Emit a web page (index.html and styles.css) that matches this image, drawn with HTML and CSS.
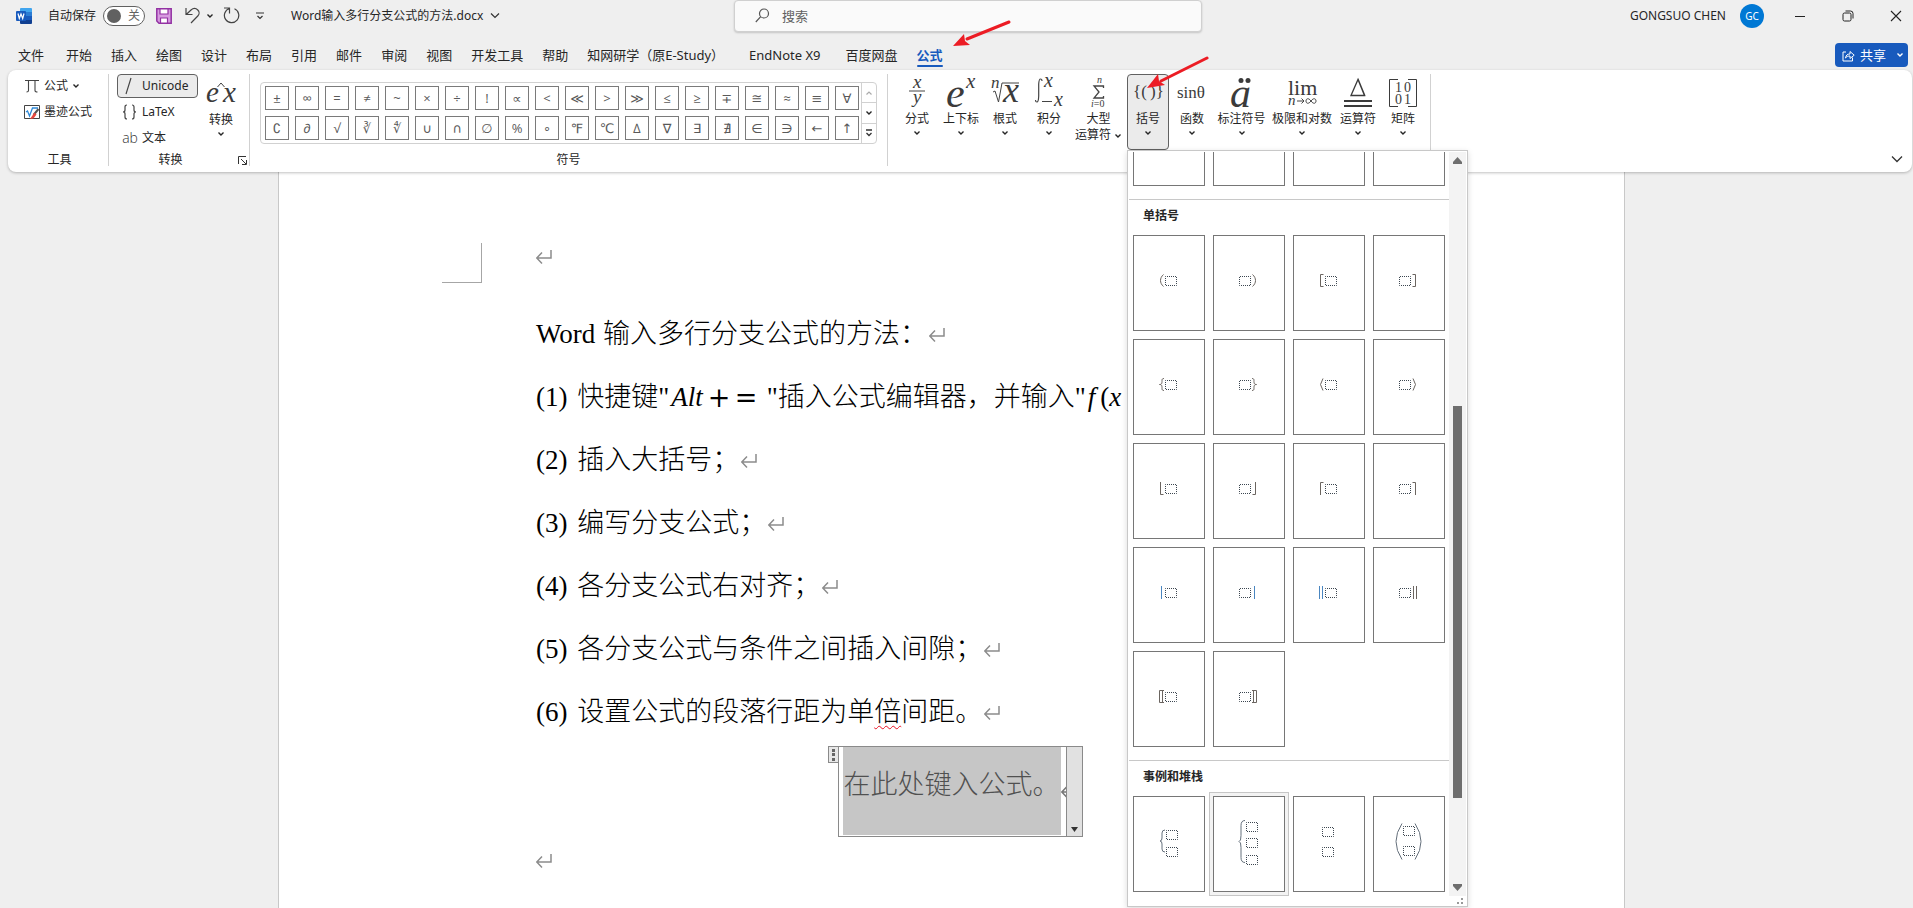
FILE: index.html
```html
<!DOCTYPE html>
<html lang="zh-CN">
<head>
<meta charset="utf-8">
<title>Word输入多行分支公式的方法.docx</title>
<link rel="stylesheet" href="styles.css">
</head>
<body>
<svg class="defs" aria-hidden="true">
  <symbol id="caret" viewBox="0 0 8 6"><path d="M1.500 1.500 4 4 6.500 1.500" fill="none" stroke="currentColor" stroke-width="1.400"/></symbol>
  <symbol id="ret" viewBox="0 0 18 16"><path d="M15 1v8H1M6 3.500.8 9 6 14.500" fill="none" stroke="#8c8c8c" stroke-width="1.500"/></symbol>
  <symbol id="ph" viewBox="0 0 12 10"><rect x=".5" y=".5" width="11" height="9" fill="none" stroke="#3c4650" stroke-dasharray="1 1" stroke-dashoffset=".5"/></symbol>
  <symbol id="paren" viewBox="0 0 5 13"><path d="M4.500.5C.5 4 .5 9 4.500 12.500"/></symbol>
  <symbol id="square" viewBox="0 0 5 13"><path d="M4.500.5h-3v12h3"/></symbol>
  <symbol id="brace" viewBox="0 0 5 13"><path d="M5 .5C2 .5 3.500 3 2.800 5 2.600 6 2 6.500.5 6.500c1.500 0 2.100.5 2.300 1.500C3.500 10 2 12.500 5 12.500"/></symbol>
  <symbol id="angle" viewBox="0 0 5 13"><path d="M4 .5 1.500 6.500 4 12.500"/></symbol>
  <symbol id="floor" viewBox="0 0 5 13"><path d="M1.500 0v12.500h3"/></symbol>
  <symbol id="ceil" viewBox="0 0 5 13"><path d="M4.500.5h-3V13"/></symbol>
  <symbol id="bar" viewBox="0 0 5 13"><path d="M2.500 0v13"/></symbol>
  <symbol id="dbar" viewBox="0 0 5 13"><path d="M.5 0v13M3.500 0v13"/></symbol>
  <symbol id="white" viewBox="0 0 5 13"><path d="M5 .5H.5v12H5M3.500.5v12"/></symbol>
</svg>

<header class="app-head">
  <div class="titlebar">
    <div class="quick">
      <svg class="word" width="16" height="16" viewBox="0 0 16 16"><path d="M5 0h10a1 1 0 0 1 1 1v3H4V1a1 1 0 0 1 1-1z" fill="#41a5ee"/><path d="M4 4h12v4H4z" fill="#2b7cd3"/><path d="M4 8h12v4H4z" fill="#185abd"/><path d="M4 12h12v3a1 1 0 0 1-1 1H5a1 1 0 0 1-1-1z" fill="#103f91"/><rect y="3" width="10" height="10" rx="1" fill="#185abd"/><path d="m2 5.500 1.300 5L5 6l1.700 4.500 1.300-5" fill="none" stroke="#fff" stroke-width="1.200"/></svg>
      <span class="autosave" id="autosave-label">自动保存</span>
      <button class="toggle" role="switch" aria-checked="false" aria-labelledby="autosave-label"><i></i>关</button>
      <button class="ib save" aria-label="保存"><svg width="16" height="16" viewBox="0 0 16 16"><path d="M.8.8h14.400v14.400H3L.8 13z" fill="#d79be0" stroke="#9332a3" stroke-width="1.500"/><path d="M4 1h8v5H4zM4.500 10h7v5h-7z" fill="#fff" stroke="#9332a3" stroke-width="1.200"/></svg></button>
      <button class="ib undo" aria-label="撤消"><svg width="15" height="17" viewBox="0 0 15 17"><path d="M1 1v6.500h6.500M1.500 7.200 6 3c2.500-2.200 5-1.800 6.800 0 1.700 1.700 1.700 4.300 0 6L6 16" fill="none" stroke="#444" stroke-width="1.200"/></svg></button>
      <button class="ib drop" aria-label="撤消列表"><svg width="8" height="6"><use href="#caret"/></svg></button>
      <button class="ib redo" aria-label="重复"><svg width="17" height="17" viewBox="0 0 17 17"><path d="M1 1h5.500v5.500M6.500 1.500a7.200 7.200 0 1 0 5 .3" fill="none" stroke="#444" stroke-width="1.200"/></svg></button>
      <button class="ib more" aria-label="自定义快速访问工具栏"><svg width="8" height="8" viewBox="0 0 8 8"><path d="M0 1h8M1.500 4 4 6.500 6.500 4" fill="none" stroke="#333" stroke-width="1.200"/></svg></button>
      <button class="doc-name">Word输入多行分支公式的方法.docx<svg width="10" height="7" viewBox="0 0 10 7"><path d="m1 1.500 4 4 4-4" fill="none" stroke="#333" stroke-width="1.200"/></svg></button>
    </div>
    <label class="search"><svg width="15" height="15" viewBox="0 0 15 15"><circle cx="9" cy="5.500" r="4.500" fill="none" stroke="#555" stroke-width="1.200"/><path d="M5.700 8.700.8 14" stroke="#555" stroke-width="1.200"/></svg><input type="text" placeholder="搜索" aria-label="搜索"></label>
    <div class="account">
      <span>GONGSUO CHEN</span><span class="avatar">GC</span>
      <button class="win" aria-label="最小化"><svg width="12" height="12"><path d="M1 6.500h10" stroke="#222"/></svg></button>
      <button class="win" aria-label="还原"><svg width="12" height="12" viewBox="0 0 12 12"><rect x="1" y="3" width="8" height="8" rx="1.500" fill="none" stroke="#222"/><path d="M3.500 1h5A2.500 2.500 0 0 1 11 3.500v5" fill="none" stroke="#222"/></svg></button>
      <button class="win" aria-label="关闭"><svg width="12" height="12"><path d="m1 1 10 10M11 1 1 11" stroke="#222" stroke-width="1.100"/></svg></button>
    </div>
  </div>

  <nav class="tabs">
    <button class="file">文件</button><button>开始</button><button>插入</button><button>绘图</button><button>设计</button><button>布局</button><button>引用</button><button>邮件</button><button>审阅</button><button>视图</button><button>开发工具</button><button>帮助</button><button class="addin">知网研学（原E-Study）</button><button class="addin">EndNote X9</button><button>百度网盘</button><button class="on">公式</button>
    <button class="share"><svg width="13" height="13" viewBox="0 0 13 13"><path d="M4 3H1v9h9.500V8.500M3.500 9c.5-3 2-4 4.500-4V2.500l4.200 3.700L8 9.500V7C6 7 4.800 7.500 3.500 9z" fill="none" stroke="#fff"/></svg><span>共享</span><svg width="8" height="6"><use href="#caret"/></svg></button>
  </nav>

  <div class="ribbon">
    <section class="group tools">
      <div class="stack">
        <button class="cmd"><svg width="16" height="16" viewBox="0 0 16 16"><path d="M1 2.500h14M4.500 2.500v10q0 1.500-2 1.500M11 2.500v10q0 1.500 2.500 1.500" fill="none" stroke="#444" stroke-width="1.100"/></svg>公式<svg class="car" width="8" height="6"><use href="#caret"/></svg></button>
        <button class="cmd"><svg width="16" height="16" viewBox="0 0 16 16"><path d="M.5 1.500h15v13H.5z" fill="#fff" stroke="#444"/><path d="m2 8 1.500-1 2 5 3-8H14" fill="none" stroke="#2b88d8" stroke-width="1.300"/><path d="m14.500 5-5 6" stroke="#555" stroke-width="2"/><path d="m10.500 8.500 2 2-3 4L6 15z" fill="#e8483f"/></svg>墨迹公式</button>
      </div>
      <div class="gl"><span>工具</span></div>
    </section>
    <section class="group convert">
      <div class="row">
        <div class="stack">
          <button class="cmd sel"><svg width="16" height="18" viewBox="0 0 16 18"><path d="M9 1 4 17" stroke="#444" stroke-width="1.200"/></svg>Unicode</button>
          <button class="cmd"><svg width="16" height="16" viewBox="0 0 16 16"><path d="M5 1Q3 1 3 3v3q0 2-2 2 2 0 2 2v3q0 2 2 2M10 1q2 0 2 2v3q0 2 2 2-2 0-2 2v3q0 2-2 2" fill="none" stroke="#444" stroke-width="1.200"/></svg>LaTeX</button>
          <button class="cmd"><span class="ab">ab</span>文本</button>
        </div>
        <button class="big"><svg width="30" height="32" viewBox="0 0 30 32"><text class="m i" x="0" y="25" font-size="29">e</text><text class="m i" x="17" y="25" font-size="29">x</text><path d="m11.500 10 3.500-4 3.500 4" fill="none" stroke="#444"/></svg><span>转换</span><svg width="8" height="6"><use href="#caret"/></svg></button>
      </div>
      <div class="gl"><span>转换</span><button class="launch" aria-label="转换选项"><svg width="9" height="9" viewBox="0 0 9 9"><path d="M.5 8V.5H8M3 3l5 5M8.500 4v4.500H4" fill="none" stroke="#333"/></svg></button></div>
    </section>
    <section class="group symbols">
      <div class="gallery">
        <div class="syms">
          <button>±</button><button>∞</button><button>=</button><button>≠</button><button>~</button><button>×</button><button>÷</button><button>!</button><button>∝</button><button>&lt;</button><button>≪</button><button>&gt;</button><button>≫</button><button>≤</button><button>≥</button><button>∓</button><button>≅</button><button>≈</button><button>≡</button><button>∀</button>
          <button>∁</button><button>∂</button><button>√</button><button>∛</button><button>∜</button><button>∪</button><button>∩</button><button>∅</button><button>%</button><button>∘</button><button>℉</button><button>℃</button><button>∆</button><button>∇</button><button>∃</button><button>∄</button><button>∈</button><button>∋</button><button>←</button><button>↑</button>
        </div>
        <div class="pager">
          <button class="dim" aria-label="上一行"><svg width="8" height="6" viewBox="0 0 8 6"><path d="M1.500 4.500 4 2 6.500 4.500" fill="none" stroke="#aaa" stroke-width="1.200"/></svg></button>
          <button aria-label="下一行"><svg width="8" height="6"><use href="#caret"/></svg></button>
          <button aria-label="其他"><svg width="8" height="8" viewBox="0 0 8 8"><path d="M1 1h6M1.500 4 4 6.500 6.500 4" fill="none" stroke="#333" stroke-width="1.300"/></svg></button>
        </div>
      </div>
      <div class="gl"><span>符号</span></div>
    </section>
    <section class="group structs">
      <button class="big"><svg width="28" height="32" viewBox="0 0 28 32"><text class="m i" x="10" y="11" font-size="19">x</text><path d="M6 14h16" stroke="#444"/><text class="m i" x="10" y="26" font-size="19">y</text></svg><span>分式</span><svg width="8" height="6"><use href="#caret"/></svg></button>
      <button class="big"><svg width="28" height="32" viewBox="0 0 28 32"><text class="m i" x="-1" y="30" font-size="42">e</text><text class="m i" x="19" y="11" font-size="21">x</text></svg><span>上下标</span><svg width="8" height="6"><use href="#caret"/></svg></button>
      <button class="big"><svg width="28" height="32" viewBox="0 0 28 32"><text class="m i" x="0" y="11" font-size="17">n</text><path d="m2 15 2-1 3.500 11L11 6h17" fill="none" stroke="#444"/><text class="m i" x="12" y="25" font-size="36">x</text></svg><span>根式</span><svg width="8" height="6"><use href="#caret"/></svg></button>
      <button class="big"><svg width="28" height="32" viewBox="0 0 28 32"><path d="M7 4Q7 2 5.500 2 4 2 3.700 7v12Q3.500 25 2 25 .5 25 .5 23" fill="none" stroke="#444" stroke-width="1.200"/><text class="m i" x="9" y="10" font-size="20">x</text><path d="M7 24.500h10" stroke="#444"/><text class="m i" x="19" y="29" font-size="20">x</text></svg><span>积分</span><svg width="8" height="6"><use href="#caret"/></svg></button>
      <button class="big w53"><svg width="28" height="32" viewBox="0 0 28 32"><text class="m i" x="12" y="6" font-size="10">n</text><path d="M18.500 11V9H9l5 6-5 6h9.500v-2" fill="none" stroke="#444" stroke-width="1.300"/><text class="m" x="6" y="30" font-size="10"><tspan class="i">i</tspan>=0</text></svg><span>大型</span><span>运算符 <svg class="car" width="8" height="6"><use href="#caret"/></svg></span></button>
      <div class="menu-anchor">
        <button class="big sel" aria-expanded="true"><svg width="28" height="32" viewBox="0 0 28 32"><text class="m" x="-1" y="20" font-size="17">{(</text><text class="m" x="16" y="20" font-size="17">)}</text></svg><span>括号</span><svg width="8" height="6"><use href="#caret"/></svg></button>
        <div class="menu">
          <div class="menu-body">
            <div class="list">
              <div class="cells cut"><button></button><button></button><button></button><button></button></div>
              <h2>单括号</h2>
              <div class="cells">
                <button aria-label="左圆括号"><svg class="g" viewBox="0 0 18 13"><use href="#paren" width="5" height="13"/><use href="#ph" x="6" y="2" width="12" height="10"/></svg></button>
                <button aria-label="右圆括号"><svg class="g flip" viewBox="0 0 18 13"><use href="#paren" width="5" height="13"/><use href="#ph" x="6" y="2" width="12" height="10"/></svg></button>
                <button aria-label="左方括号"><svg class="g" viewBox="0 0 18 13"><use href="#square" width="5" height="13"/><use href="#ph" x="6" y="2" width="12" height="10"/></svg></button>
                <button aria-label="右方括号"><svg class="g flip" viewBox="0 0 18 13"><use href="#square" width="5" height="13"/><use href="#ph" x="6" y="2" width="12" height="10"/></svg></button>
                <button aria-label="左花括号"><svg class="g" viewBox="0 0 18 13"><use href="#brace" width="5" height="13"/><use href="#ph" x="6" y="2" width="12" height="10"/></svg></button>
                <button aria-label="右花括号"><svg class="g flip" viewBox="0 0 18 13"><use href="#brace" width="5" height="13"/><use href="#ph" x="6" y="2" width="12" height="10"/></svg></button>
                <button aria-label="左尖括号"><svg class="g" viewBox="0 0 18 13"><use href="#angle" width="5" height="13"/><use href="#ph" x="6" y="2" width="12" height="10"/></svg></button>
                <button aria-label="右尖括号"><svg class="g flip" viewBox="0 0 18 13"><use href="#angle" width="5" height="13"/><use href="#ph" x="6" y="2" width="12" height="10"/></svg></button>
                <button aria-label="左下取整"><svg class="g" viewBox="0 0 18 13"><use href="#floor" width="5" height="13"/><use href="#ph" x="6" y="2" width="12" height="10"/></svg></button>
                <button aria-label="右下取整"><svg class="g flip" viewBox="0 0 18 13"><use href="#floor" width="5" height="13"/><use href="#ph" x="6" y="2" width="12" height="10"/></svg></button>
                <button aria-label="左上取整"><svg class="g" viewBox="0 0 18 13"><use href="#ceil" width="5" height="13"/><use href="#ph" x="6" y="2" width="12" height="10"/></svg></button>
                <button aria-label="右上取整"><svg class="g flip" viewBox="0 0 18 13"><use href="#ceil" width="5" height="13"/><use href="#ph" x="6" y="2" width="12" height="10"/></svg></button>
                <button aria-label="左竖线"><svg class="g blue" viewBox="0 0 18 13"><use href="#bar" width="5" height="13"/><use href="#ph" x="6" y="2" width="12" height="10"/></svg></button>
                <button aria-label="右竖线"><svg class="g blue flip" viewBox="0 0 18 13"><use href="#bar" width="5" height="13"/><use href="#ph" x="6" y="2" width="12" height="10"/></svg></button>
                <button aria-label="左双竖线"><svg class="g blue" viewBox="0 0 18 13"><use href="#dbar" width="5" height="13"/><use href="#ph" x="6" y="2" width="12" height="10"/></svg></button>
                <button aria-label="右双竖线"><svg class="g flip" viewBox="0 0 18 13"><use href="#dbar" width="5" height="13"/><use href="#ph" x="6" y="2" width="12" height="10"/></svg></button>
                <button aria-label="左双方括号"><svg class="g" viewBox="0 0 18 13"><use href="#white" width="5" height="13"/><use href="#ph" x="6" y="2" width="12" height="10"/></svg></button>
                <button aria-label="右双方括号"><svg class="g flip" viewBox="0 0 18 13"><use href="#white" width="5" height="13"/><use href="#ph" x="6" y="2" width="12" height="10"/></svg></button>
              </div>
              <h2>事例和堆栈</h2>
              <div class="cells">
                <button aria-label="事例，两个条件"><svg class="s" viewBox="0 0 30 48"><path d="M11 10q-3 0-3 3v5q0 3-2 3 2 0 2 3v5q0 3 3 3"/><use href="#ph" x="12" y="10" width="12" height="10"/><use href="#ph" x="12" y="27" width="12" height="10"/></svg></button>
                <button class="hover" aria-label="事例，三个条件"><svg class="s" viewBox="0 0 30 48"><path d="M11 .5q-4 0-4 5v10q0 6-2 6 2 0 2 6v10q0 5 4 5"/><use href="#ph" x="12" y="2" width="12" height="10"/><use href="#ph" x="12" y="18" width="12" height="10"/><use href="#ph" x="12" y="35" width="12" height="10"/></svg></button>
                <button aria-label="堆栈对象"><svg class="s" viewBox="0 0 30 48"><use href="#ph" x="8" y="7" width="12" height="10"/><use href="#ph" x="8" y="27" width="12" height="10"/></svg></button>
                <button aria-label="圆括号堆栈"><svg class="s" viewBox="0 0 30 48"><path d="M8 3.500q-12 18 0 36M21 3.500q12 18 0 36"/><use href="#ph" x="9" y="6" width="12" height="10"/><use href="#ph" x="9" y="26" width="12" height="10"/></svg></button>
              </div>
            </div>
            <div class="scroll"><svg width="9" height="7"><path d="M4.500 0 9 5v2H0V5z" fill="#6e6e6e"/></svg><i></i><svg width="9" height="7"><path d="M4.500 7 9 2V0H0v2z" fill="#6e6e6e"/></svg></div>
          </div>
          <div class="grip"><svg width="6" height="6"><path d="M4 0h2v2H4zM4 4h2v2H4zM0 4h2v2H0z" fill="#999"/></svg></div>
        </div>
      </div>
      <button class="big"><svg width="30" height="32" viewBox="0 0 30 32"><text class="m" x="0" y="21" font-size="17">sinθ</text></svg><span>函数</span><svg width="8" height="6"><use href="#caret"/></svg></button>
      <button class="big w53"><svg width="28" height="32" viewBox="0 0 28 32"><text class="m i" x="2" y="30" font-size="42">a</text><circle cx="13" cy="3.500" r="2.500" fill="#3b3b3b"/><circle cx="20" cy="3.500" r="2.500" fill="#3b3b3b"/></svg><span>标注符号</span><svg width="8" height="6"><use href="#caret"/></svg></button>
      <button class="big w64"><svg width="30" height="32" viewBox="0 0 30 32"><text class="m" x="1" y="18" font-size="22">lim</text><text class="m i" x="1" y="28" font-size="15">n</text><path d="M10 24h7m-2.500-2.500L17 24l-2.500 2.500M24 24c-2.500-3.500-5-2.500-5 0s2.500 3.500 5 0 5-2.500 5 0-2.500 3.500-5 0" fill="none" stroke="#444"/></svg><span>极限和对数</span><svg width="8" height="6"><use href="#caret"/></svg></button>
      <button class="big w44"><svg width="28" height="32" viewBox="0 0 28 32"><path d="M7 18.500 14 2.500l6.500 16zM14 2l7 17" fill="none" stroke="#3b3b3b" stroke-width="1.300"/><path d="M0 24h28M0 29h28" stroke="#3b3b3b" stroke-width="2"/></svg><span>运算符</span><svg width="8" height="6"><use href="#caret"/></svg></button>
      <button class="big"><svg width="28" height="32" viewBox="0 0 28 32"><path d="M9 2.500H.5v27H9M19 2.500h8.500v27H19" fill="none" stroke="#3b3b3b"/><text class="m" x="6" y="15" font-size="14">1</text><text class="m" x="15" y="15" font-size="14">0</text><text class="m" x="6" y="27" font-size="14">0</text><text class="m" x="15" y="27" font-size="14">1</text></svg><span>矩阵</span><svg width="8" height="6"><use href="#caret"/></svg></button>
    </section>
    <button class="collapse" aria-label="折叠功能区"><svg width="12" height="8" viewBox="0 0 12 8"><path d="m1 1.500 5 5 5-5" fill="none" stroke="#333" stroke-width="1.300"/></svg></button>
  </div>
</header>

<main class="desk">
  <article class="page">
    <i class="crop"></i>
    <p class="first"><svg class="ret" width="18" height="16"><use href="#ret"/></svg></p>
    <p>Word <span class="title">输入多行分支公式的方法：</span><svg class="ret" width="18" height="16"><use href="#ret"/></svg></p>
    <p>(1) <span>快捷键"</span><em>Alt</em><b class="op">+</b><b class="op eqs">=</b><span>"插入公式编辑器，并输入"</span><em class="fn">f</em>(<em>x</em></p>
    <p>(2) <span>插入大括号；</span><svg class="ret" width="18" height="16"><use href="#ret"/></svg></p>
    <p>(3) <span>编写分支公式；</span><svg class="ret" width="18" height="16"><use href="#ret"/></svg></p>
    <p>(4) <span>各分支公式右对齐；</span><svg class="ret" width="18" height="16"><use href="#ret"/></svg></p>
    <p>(5) <span>各分支公式与条件之间插入间隙；</span><svg class="ret" width="18" height="16"><use href="#ret"/></svg></p>
    <p>(6) <span>设置公式的段落行距为单<u>倍</u>间距。</span><svg class="ret" width="18" height="16"><use href="#ret"/></svg></p>
    <div class="eq">
      <span class="handle"><i></i><i></i><i></i></span>
      <div class="eq-box"><span class="eq-text">在此处键入公式。</span><svg width="5" height="16" viewBox="0 0 5 16"><path d="M6 2.500.8 8 6 13.500M1 8h5" fill="none" stroke="#777" stroke-width="1.500"/></svg><button aria-label="公式选项"><svg width="7" height="5"><path d="M0 0h7L3.500 5z" fill="#333"/></svg></button></div>
    </div>
    <p class="last"><svg class="ret" width="18" height="16"><use href="#ret"/></svg></p>
  </article>
</main>

<svg class="arrow a1" width="60" height="30" viewBox="0 0 60 30"><path d="M56 3 14 20" stroke="#ec1c24" stroke-width="3" stroke-linecap="round"/><path d="m0 27 11-12 1 7 5 4z" fill="#ec1c24"/></svg>
<svg class="arrow a2" width="64" height="34" viewBox="0 0 64 34"><path d="M60 2 14 25" stroke="#ec1c24" stroke-width="3" stroke-linecap="round"/><path d="m0 32 11-14 1 7 6 4z" fill="#ec1c24"/></svg>
</body>
</html>
```
FILE: styles.css
```css
* { box-sizing: border-box; }
body {
  margin: 0;
  height: 100vh;
  overflow: hidden;
  display: flex;
  flex-direction: column;
  background: #efefef;
  color: #262626;
  font: 12px/16px "Noto Sans", "Noto Sans CJK SC", sans-serif;
}
button {
  margin: 0;
  padding: 0;
  border: 0;
  background: none;
  color: inherit;
  font: inherit;
  white-space: nowrap;
}
svg { flex: none; display: block; }
.defs { position: absolute; width: 0; height: 0; }
.app-head { position: relative; z-index: 2; }

/* title bar */
.titlebar {
  display: grid;
  grid-template-columns: 734fr 468fr 711fr;
  height: 32px;
}
.quick { display: flex; align-items: center; padding: 0 0 1px 16px; height: 32px; }
.autosave { margin: 0 7px 0 16px; }
.toggle {
  display: flex;
  align-items: center;
  gap: 7px;
  width: 42px;
  height: 20px;
  padding-left: 3px;
  border: 1px solid #616161;
  border-radius: 10px;
  background: #fff;
  color: #616161;
}
.toggle i { width: 14px; height: 14px; border-radius: 50%; background: #616161; }
.ib { display: flex; }
.save { margin-left: 11px; }
.undo { margin-left: 13px; }
.drop { margin-left: 6px; }
.redo { margin-left: 9px; }
.more { margin-left: 16px; }
.doc-name { display: flex; align-items: center; gap: 7px; margin-left: 27px; }
.search {
  display: flex;
  align-items: center;
  gap: 12px;
  height: 32px;
  padding: 0 20px 1px;
  background: #fafafa;
  border: 1px solid #d0d0d0;
  border-radius: 4px;
  box-shadow: 0 1px 2px rgba(0, 0, 0, .18);
}
.search input {
  flex: 1;
  min-width: 0;
  border: 0;
  padding: 0;
  background: none;
  font: 13px/18px "Noto Sans", "Noto Sans CJK SC", sans-serif;
}
.search input::placeholder { color: #616161; opacity: 1; }
.account { display: flex; align-items: center; justify-content: flex-end; padding-right: 11px; }
.avatar {
  width: 24px;
  margin: 0 30px 0 14px;
  border-radius: 50%;
  background: #0078d4;
  color: #fff;
  font-size: 10px;
  line-height: 24px;
  text-align: center;
}
.win + .win { margin-left: 36px; }

/* tabs */
.tabs { display: flex; gap: 19px; height: 38px; padding: 10px 5px 2px 18px; font-size: 13px; }
.tabs button { position: relative; height: 26px; }
.tabs .file { margin-right: 3px; }
.tabs .addin { margin-right: 6px; }
.tabs .on { color: #185abd; font-weight: 700; }
.tabs .on::after {
  content: "";
  position: absolute;
  left: 0;
  right: 0;
  bottom: 1px;
  height: 2px;
  border-radius: 1px;
  background: #185abd;
}
.tabs .share {
  display: flex;
  align-items: center;
  gap: 5px;
  height: 24px;
  margin: 1px 0 0 auto;
  padding: 0 4px 0 7px;
  border-radius: 4px;
  background: #185abd;
  color: #fff;
}
.share svg:last-child { margin-left: 5px; }

/* ribbon */
.ribbon {
  position: relative;
  display: flex;
  height: 102px;
  margin: 0 1px 0 8px;
  padding: 4px 0 6px;
  border-radius: 8px;
  background: #fff;
  box-shadow: 0 1px 3px rgba(0, 0, 0, .25);
}
.group { display: flex; flex-direction: column; border-right: 1px solid #d1d1d1; }
.gl { display: flex; margin-top: auto; height: 12px; line-height: 12px; align-items: center; }
.gl span { flex: 1; text-align: center; }
.row { display: flex; gap: 2px; }
.stack { display: flex; flex-direction: column; gap: 2px; }
.cmd { display: flex; align-items: center; gap: 4px; height: 24px; }
.car { display: inline-block; vertical-align: middle; }
.tools { width: 101px; padding-left: 16px; }
.tools .gl { padding-right: 13px; }
.convert { width: 141px; padding-left: 8px; }
.convert .gl { margin-left: -14px; }
.convert .cmd { width: 81px; padding-left: 4px; border: 1px solid transparent; border-radius: 4px; }
.convert .cmd.sel, .big.sel { background: #ebebeb; border: 1px solid #616161; border-radius: 4px; }
.ab { width: 16px; font: 300 14px/16px "Open Sans", sans-serif; color: #333; }
.launch { margin-right: 2px; }
.symbols { width: 638px; padding: 8px 10px 0 10px; }
.gallery { display: flex; height: 62px; border: 1px solid #d1d1d1; border-radius: 4px; }
.syms {
  flex: 1;
  display: grid;
  grid-template-columns: repeat(20, 24px);
  grid-auto-rows: 24px;
  gap: 6px;
  padding: 3px 0 0 4px;
}
.syms button {
  border: 1px solid #7a7a7a;
  color: #595959;
  font: 13px/20px "Open Sans", "DejaVu Sans", sans-serif;
}
.pager { display: flex; flex-direction: column; width: 15px; border-left: 1px solid #d1d1d1; }
.pager button { flex: 1; display: grid; place-items: center; }
.pager button + button { border-top: 1px solid #d1d1d1; }
.structs { flex-direction: row; gap: 2px; padding: 0 6px 0 8px; }
.big {
  display: flex;
  flex-direction: column;
  align-items: center;
  width: 42px;
  height: 76px;
  padding-top: 2px;
  border: 1px solid transparent;
}
.big span { line-height: 16px; }
.big > svg + span { margin-top: 2px; }
.big > span + svg { margin-top: 3px; }
.w44 { width: 44px; }
.w53 { width: 53px; }
.w64 { width: 64px; }
.m { font-family: "Liberation Serif", serif; fill: #3b3b3b; }
.i { font-style: italic; }
.big svg { overflow: visible; }
.convert .big > svg:first-child + span { margin-top: 3px; }
.collapse { margin: auto 9px 3px auto; }

/* bracket menu */
.menu-anchor { position: relative; }
.menu {
  position: absolute;
  top: 76px;
  left: 0;
  width: 341px;
  border: 1px solid #c8c8c8;
  background: #fff;
  box-shadow: 0 2px 6px rgba(0, 0, 0, .15);
  padding: 1px;
}
.menu-body { display: flex; }
.list { flex: 1; }
.cells { display: grid; grid-template-columns: repeat(4, 72px); grid-auto-rows: 96px; gap: 8px; padding: 0 4px 13px; }
.cells button { display: grid; place-items: center; border: 1px solid #767676; background: #fff; }
.cells.cut { grid-auto-rows: 34px; }
.cut button { border-top: 0; }
.list h2 {
  margin: 0;
  padding: 8px 14px 11px;
  border-top: 1px solid #c8c8c8;
  font-size: 12px;
  line-height: 16px;
  font-weight: 700;
}
.cells:last-child { padding-bottom: 4px; }
.cells .hover { outline: 1px solid #c6c6c6; outline-offset: 3px; box-shadow: 0 0 0 3px #f3f3f3; }
.g { width: 18px; height: 13px; margin: 0 2px 5px 0; fill: none; stroke: #6b6560; }
.g.blue { stroke: #4a86c0; }
.flip { transform: scaleX(-1); }
.s { width: 30px; height: 48px; overflow: visible; fill: none; stroke: #65707c; }
.scroll { width: 17px; display: flex; flex-direction: column; align-items: center; background: #f3f3f3; padding: 5px 0; }
.scroll i { width: 9px; height: 392px; margin: auto 0 86px; background: #6e6e6e; }
.grip { display: flex; justify-content: flex-end; padding: 2px 3px 1px; }

/* document */
.desk { flex: 1; min-height: 0; padding: 0 288px 0 278px; }
.page {
  position: relative;
  height: 100%;
  padding: 53px 257px 0 257px;
  background: #fff;
  border: solid #c8c8c8;
  border-width: 0 1px;
  color: #000;
  font: 27px/63px "Liberation Serif", "Noto Sans CJK SC", serif;
}
.page p { display: flex; align-items: center; margin: 0; height: 63px; white-space: pre; }
.page p span { font-weight: 300; margin: 0 2px 0 3px; }
.page p .title { margin-left: 1px; }
.page .first { margin-bottom: 15px; }
.page p.last { height: 48px; }
.page em { font-style: italic; }
.page .op { font: 400 27px/63px "DejaVu Serif", serif; margin-left: 5px; width: 22px; }
.page .eqs { margin-right: 7px; }
.page .fn { margin: 0 5px 0 0; }
.page u { text-decoration: underline wavy #e81123 1px; text-underline-offset: 4px; }
.crop {
  position: absolute;
  left: 163px;
  top: 71px;
  width: 40px;
  height: 40px;
  border: solid #a6a6a6;
  border-width: 0 1px 1px 0;
}
.eq { display: flex; justify-content: center; margin: 2px 0 0; padding-left: 7px; }
.handle {
  display: flex;
  flex-direction: column;
  align-items: center;
  justify-content: space-evenly;
  width: 10px;
  height: 17px;
  border: 1px solid #8a8a8a;
  border-right: 0;
  background: #e8e8e8;
}
.handle i { width: 3px; height: 3px; background: #666; }
.eq-box { display: flex; align-items: center; height: 91px; border: 1px solid #8a8a8a; padding-left: 4px; }
.eq-text {
  align-self: stretch;
  margin-bottom: 1px;
  padding: 7px 1px 0;
  background: #c6c6c6;
  color: #505050;
  font-weight: 300;
}
.eq-box button {
  display: flex;
  align-items: flex-end;
  justify-content: center;
  width: 16px;
  height: 100%;
  padding-bottom: 4px;
  border-left: 1px solid #8a8a8a;
  background: #e1e1e1;
}

/* pointer arrows drawn over the window */
.arrow { position: absolute; z-index: 5; pointer-events: none; }
.a1 { left: 953px; top: 19px; }
.a2 { left: 1147px; top: 56px; }
```
